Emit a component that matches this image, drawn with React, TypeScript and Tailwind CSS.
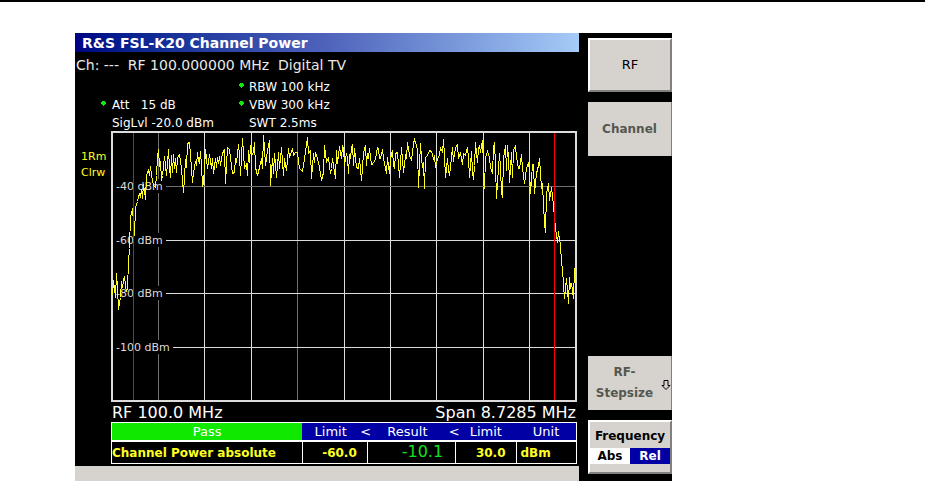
import { useState } from 'react';
import clsx from 'clsx';

const TRACE =
  '1,164 2,149 3,157 4,166 5,142 6,157 7,178 9,166 10,150 11,156 12,149 13,145 14,154 15,160 16,156 17,131 18,117 19,84 20,83 21,77 22,91 23,104 24,76 26,70 28,62 29,66 30,58 31,67 32,53 33,59 34,68 35,44 37,38 38,44 39,35 40,43 41,49 42,54 44,56 45,44 46,26 47,18 48,35 49,30 50,49 51,44 53,25 55,44 57,18 58,37 59,46 60,24 61,41 62,23 63,37 64,27 65,41 66,26 68,23 70,37 71,49 72,61 73,46 74,28 75,36 76,12 78,11 79,24 80,37 81,51 82,41 84,30 85,34 86,21 87,29 88,31 89,20 90,34 91,55 92,51 93,37 94,18 95,27 96,37 98,23 100,37 101,27 102,42 104,27 105,36 106,26 107,32 108,25 109,34 111,22 113,18 114,52 116,16 118,18 119,27 121,42 123,41 124,27 125,31 127,13 128,24 129,44 131,7 132,22 133,37 135,32 136,44 137,19 138,31 139,14 140,24 142,21 143,11 144,36 146,44 148,36 150,27 151,37 152,4 153,16 154,34 156,19 158,9 159,54 161,27 162,42 163,22 164,32 165,46 167,21 168,37 170,16 172,44 173,27 175,39 177,17 178,26 181,17 182,24 184,21 186,21 188,37 191,40 193,27 196,6 197,22 199,19 200,47 202,22 203,31 204,21 206,27 208,36 210,49 212,41 213,14 215,31 217,26 219,42 220,37 221,27 224,47 225,19 226,32 228,15 230,27 231,15 232,17 233,34 235,22 236,26 237,42 238,23 239,27 240,17 241,13 242,34 243,17 245,36 247,37 248,27 250,49 251,37 252,21 254,14 255,34 256,22 257,27 258,17 260,33 262,32 264,27 266,16 267,17 268,27 269,27 271,18 272,27 274,37 275,42 276,26 278,42 279,27 281,19 282,34 283,37 284,22 286,21 288,46 290,16 292,41 294,24 295,26 296,11 298,24 300,29 302,12 303,8 305,14 306,19 307,56 309,12 310,27 311,36 312,31 313,57 314,26 316,24 318,19 320,20 322,27 323,24 324,36 326,27 328,24 329,16 331,21 332,8 333,24 334,46 335,37 336,27 337,39 338,44 340,26 341,16 342,30 343,21 345,14 346,13 347,27 349,21 350,27 351,33 352,22 354,24 356,16 357,27 358,46 360,20 361,41 362,48 363,34 364,11 366,31 367,17 368,14 369,21 371,9 372,34 373,57 374,26 376,20 378,26 379,36 381,42 382,17 383,11 384,34 385,67 386,51 388,22 389,37 390,61 391,66 392,27 394,14 395,39 396,14 397,26 398,51 400,21 401,46 402,19 404,14 405,26 407,37 408,37 410,23 411,37 413,52 415,37 417,31 418,39 419,62 421,33 422,33 423,62 425,42 427,34 428,27 430,57 431,52 432,74 433,91 434,101 435,61 436,58 437,52 438,69 440,56 442,74 443,86 444,97 446,111 447,100 448,109 449,112 450,132 451,136 452,154 453,167 455,147 457,172 458,146 459,157 460,152 462,167 463,137';

const V_LINES = [
  { x: 47, dim: true },
  { x: 93, dim: false },
  { x: 140, dim: false },
  { x: 186, dim: true },
  { x: 233, dim: false },
  { x: 279, dim: false },
  { x: 325, dim: false },
  { x: 372, dim: false },
  { x: 418, dim: false },
];

const H_LINES = [
  { y: 55, label: '-40 dBm', width: 50, dim: true },
  { y: 109, label: '-60 dBm', width: 50, dim: false },
  { y: 162, label: '-80 dBm', width: 50, dim: false },
  { y: 216, label: '-100 dBm', width: 57, dim: false },
];

function Spectrum() {
  return (
    <svg viewBox="0 0 466 271" className="block w-full" shapeRendering="crispEdges" role="img" aria-label="Channel power spectrum">
      {V_LINES.map(({ x, dim }) => (
        <rect key={x} x={x} y={2} width={1} height={267} fill={dim ? '#6e6e6e' : '#dcdcdc'} />
      ))}
      {H_LINES.map(({ y, width, dim }) => (
        <g key={y}>
          <rect x={2} y={y} width={462} height={1} fill={dim ? '#6e6e6e' : '#dcdcdc'} />
          <rect x={2} y={y - 7} width={width + 3} height={14} fill="#000" />
        </g>
      ))}
      <rect x={1} y={1} width={464} height={269} fill="none" stroke="#dcdcdc" strokeWidth={2} />
      {H_LINES.map(({ y, label }) => (
        <text key={label} x={5} y={y + 4} fill="#dcdcdc" fontSize={11}>{label}</text>
      ))}
      <polyline points={TRACE} fill="none" stroke="#ffff20" strokeWidth={1} transform="translate(0.5 0.5)" />
      <rect x={22} y={2} width={1} height={267} fill="#f00" />
      <rect x={443} y={2} width={1} height={267} fill="#f00" />
    </svg>
  );
}

function Star() {
  return (
    <svg viewBox="0 0 5 5" className="h-[5px] w-[5px] self-center -mt-1" shapeRendering="crispEdges" aria-hidden="true">
      <path d="M1 0h3v1h1v2h-1v1h-1v1h-1v-1h-1v-1h-1v-2h1z" fill="#10e810" />
    </svg>
  );
}

const keyFlat = 'h-[54px] w-full border-r border-[#808080] bg-[#d6d3ce] text-xs font-bold text-[#555850]';
const keyRaised = 'w-full border-2 border-t-white border-l-white border-r-[#808080] border-b-[#808080] bg-[#d6d3ce] text-black';

export default function App() {
  const [mode, setMode] = useState('Rel');

  return (
    <div className="min-h-screen bg-white border-t-2 border-black font-['DejaVu_Sans',Verdana,sans-serif] text-xs text-white">
      <div className="mt-[31px] grid grid-cols-[75fr_597fr_253fr]">
        <div className="col-start-2 flex bg-black">
          <main className="flex-1 min-w-0">
            <h1 className="h-[19px] pl-[7px] bg-linear-to-r from-[#000084] via-[#4f63bb] to-[#a5cbf7] text-sm leading-5 font-bold">
              R&amp;S FSL-K20 Channel Power
            </h1>
            <p className="pl-px text-sm leading-[26px] whitespace-pre text-[#e8e8e8]">Ch: ---  RF 100.000000 MHz  Digital TV</p>

            <div className="h-[53px] grid grid-cols-[26px_11px_127px_10px_1fr] auto-rows-[18px] leading-[18px] whitespace-pre">
              <span className="col-start-4 grid"><Star /></span>
              <span>RBW 100 kHz</span>
              <span className="col-start-2 grid"><Star /></span>
              <span>Att   15 dB</span>
              <span className="grid"><Star /></span>
              <span>VBW 300 kHz</span>
              <span className="col-start-3">SigLvl -20.0 dBm</span>
              <span className="col-start-5">SWT 2.5ms</span>
            </div>

            <div className="flex pr-[2px]">
              <div className="w-9 pl-[6px] pt-[18px] text-[11px] leading-4 text-[#ffff20]">
                <div>1Rm</div>
                <div>Clrw</div>
              </div>
              <div className="flex-1 min-w-0">
                <Spectrum />
                <div className="flex justify-between px-px text-base leading-[22px] h-5">
                  <span>RF 100.0 MHz</span>
                  <span>Span 8.7285 MHz</span>
                </div>
                <table className="w-full table-fixed border-collapse border border-white text-xs font-bold text-[#ffff20]">
                  <colgroup>
                    <col className="w-[41%]" />
                    <col className="w-[14%]" />
                    <col className="w-[19%]" />
                    <col className="w-[13%]" />
                    <col className="w-[13%]" />
                  </colgroup>
                  <thead>
                    <tr className="h-[18px] bg-[#0000a5] text-[13px] leading-4 text-white border-b-2 border-white">
                      <th className="bg-[#10e800] p-0 pt-px font-normal">Pass</th>
                      <th className="relative p-0 pt-px pr-2 font-normal">Limit<span className="absolute -right-1">&lt;</span></th>
                      <th className="relative p-0 pt-px pr-2 font-normal">Result<span className="absolute -right-1">&lt;</span></th>
                      <th className="p-0 pt-px font-normal">Limit</th>
                      <th className="p-0 pt-px font-normal">Unit</th>
                    </tr>
                  </thead>
                  <tbody>
                    <tr className="h-[22px] leading-[18px]">
                      <td className="p-0 pt-px border border-white whitespace-nowrap">Channel Power absolute</td>
                      <td className="p-0 pt-px pr-[10px] border border-white text-right">-60.0</td>
                      <td className="p-0 pr-3 border border-white text-right text-base leading-[18px] font-normal text-[#10e020]">-10.1</td>
                      <td className="p-0 pt-px pr-[10px] border border-white text-right">30.0</td>
                      <td className="p-0 pt-px pl-1 border border-white">dBm</td>
                    </tr>
                  </tbody>
                </table>
              </div>
            </div>
            <div className="mt-[2px] h-4 bg-[#d6d3ce]" />
          </main>

          <nav className="w-[93px] pl-[9px] pt-[5px] pb-2 flex flex-col gap-[10px]" aria-label="Softkeys">
            <button type="button" className={clsx(keyRaised, 'h-[54px] text-[13px]')}>RF</button>
            <button type="button" className={keyFlat} disabled>Channel</button>
            <button type="button" className={clsx(keyFlat, 'mt-auto flex items-center')} disabled>
              <span className="flex-1 text-center leading-[21px]">RF-<br />Stepsize</span>
              <svg viewBox="0 0 10 12" className="h-3 w-[10px] shrink-0 mt-1" aria-hidden="true">
                <path d="M3 1.5h4v5h2L5 10.5L1 6.5h2z" fill="none" stroke="#000" />
              </svg>
            </button>
            <button
              type="button"
              className={clsx(keyRaised, 'h-[54px] flex flex-col justify-end pb-2 text-xs font-bold')}
              onClick={() => setMode(mode === 'Rel' ? 'Abs' : 'Rel')}
            >
              <span className="block w-full text-center leading-6">Frequency</span>
              <span className="grid grid-cols-2 w-full text-xs leading-4">
                {['Abs', 'Rel'].map((m) => (
                  <span key={m} className={m === mode ? 'bg-[#0000a5] text-white' : 'bg-white text-black'}>{m}</span>
                ))}
              </span>
            </button>
          </nav>
        </div>
      </div>
    </div>
  );
}
